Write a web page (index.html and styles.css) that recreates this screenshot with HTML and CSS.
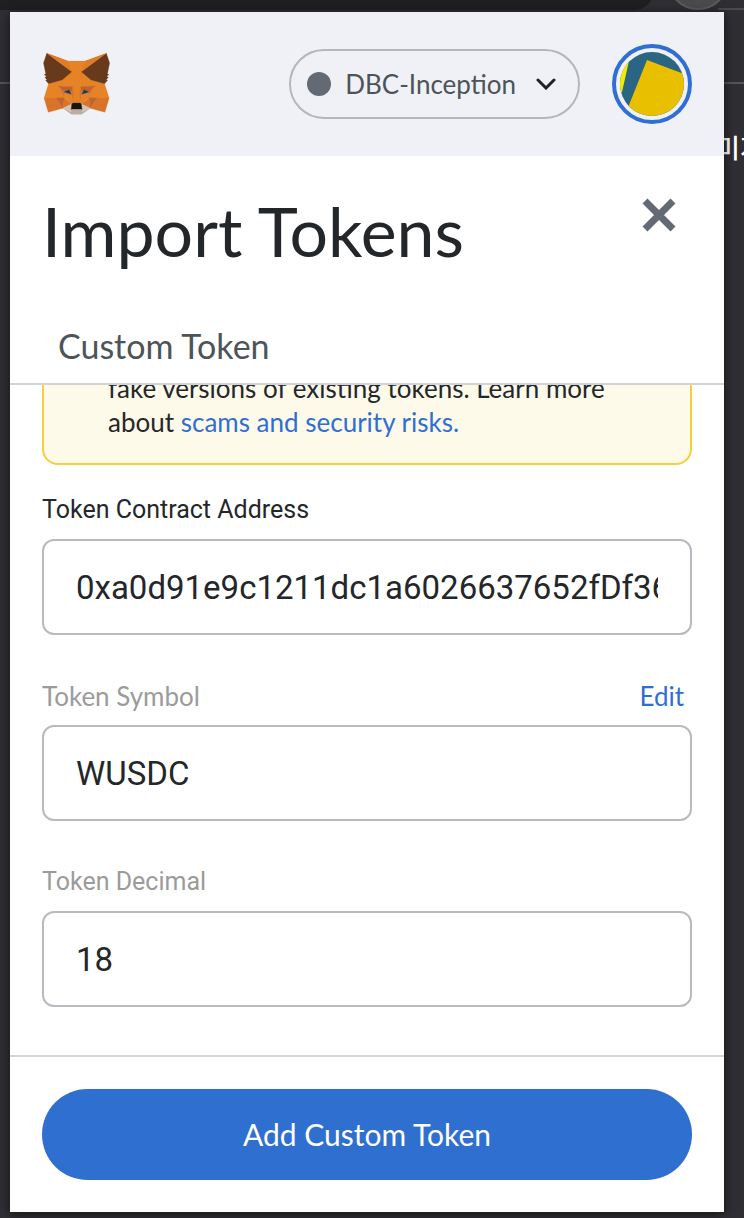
FILE: index.html
```html
<!DOCTYPE html>
<html lang="en">
<head>
<meta charset="utf-8">
<title>Import Tokens</title>
<meta name="viewport" content="width=device-width, initial-scale=1">
<link rel="stylesheet" href="styles.css">
</head>
<body>
<div class="backdrop" aria-hidden="true">
  <div class="backdrop-tabs"></div>
  <div class="backdrop-avatar"></div>
  <div class="backdrop-toolbar"></div>
  <span class="backdrop-text" lang="ko">미지</span>
</div>
<div class="popup">
  <header class="app-header">
    <svg class="fox" viewBox="26 32 266 244" role="img" aria-label="MetaMask">
      <g fill="#d9722a" stroke="#d9722a">
        <polygon points="274.1,35.5 174.6,109.4 193,65.8"/>
        <polygon points="44.4,35.5 143.1,110.1 125.6,65.8"/>
        <polygon points="238.3,206.8 211.8,247.4 268.5,263 284.8,207.7"/>
        <polygon points="33.9,207.7 50.1,263 106.8,247.4 80.3,206.8"/>
        <polygon points="103.6,138.2 87.8,162.1 144.1,164.6 142.1,104.1"/>
        <polygon points="214.9,138.2 175.9,103.4 174.6,164.6 230.8,162.1"/>
        <polygon points="106.8,247.4 140.6,230.9 111.4,208.1"/>
        <polygon points="177.9,230.9 211.8,247.4 207.1,208.1"/>
      </g>
      <g fill="#d4c2b4" stroke="#d4c2b4">
        <polygon points="211.8,247.4 177.9,230.9 180.6,253 180.3,262.3"/>
        <polygon points="106.8,247.4 138.3,262.3 138.1,253 140.6,230.9"/>
      </g>
      <g fill="#e58325" stroke="#e58325">
        <polygon points="179.8,193.5 173.1,227.6 177.9,230.9 207.1,208.1 208.1,185.2"/>
        <polygon points="110.6,185.2 111.4,208.1 140.6,230.9 145.4,227.6 138.8,193.5"/>
        <polygon points="267.2,153.5 214.9,138.2 230.8,162.1 207.1,208.1 238.3,207.7 284.8,207.7"/>
        <polygon points="103.6,138.2 51.3,153.5 33.9,207.7 80.3,207.7 111.4,208.1 87.8,162.1"/>
        <polygon points="214.9,138.2 177.9,106.9 174.6,164.6 230.8,162.1"/>
        <polygon points="103.6,138.2 140.6,106.9 144.1,164.6 87.8,162.1"/>
        <polygon points="174.6,164.6 177.9,106.9 193.1,65.8 125.6,65.8 140.6,106.9 144.1,164.6 145.3,182.8 145.4,227.6 173.1,227.6 173.3,182.8"/>
      </g>
      <g fill="#d9742a" stroke="#d9742a">
        <polygon points="87.8,162.1 111.4,208.1 110.6,185.2"/>
        <polygon points="208.1,185.2 207.1,208.1 230.8,162.1"/>
        <polygon points="144.1,164.6 138.8,193.5 145.4,227.6 146.9,182.7"/>
        <polygon points="174.6,164.6 171.9,182.6 173.1,227.6 179.8,193.5"/>
      </g>
      <g fill="#c1632a" stroke="#c1632a">
        <polygon points="106.8,247.4 111.6,206.8 80.3,207.7"/>
        <polygon points="207,206.8 211.8,247.4 238.3,207.7"/>
        <polygon points="230.8,162.1 174.6,164.6 179.8,193.5 188.1,176.1 208.1,185.2"/>
        <polygon points="110.6,185.2 130.6,176.1 138.8,193.5 144.1,164.6 87.8,162.1"/>
      </g>
      <g fill="#263445" stroke="#263445">
        <polygon points="138.8,193.5 110.6,185.2 130.5,176.1"/>
        <polygon points="179.7,193.5 188,176.1 208,185.2"/>
      </g>
      <polygon fill="#bcae9f" points="180.3,262.3 180.6,253 178.1,250.8 140.4,250.8 138.1,253 138.3,262.3 106.8,247.4 117.8,256.4 140.1,271.9 178.4,271.9 200.8,256.4 211.8,247.4"/>
      <polygon fill="#161616" stroke="#161616" points="177.9,230.9 173.1,227.6 145.4,227.6 140.6,230.9 138.1,253 140.4,250.8 178.1,250.8 180.6,253"/>
      <g fill="#68391b" stroke="#68391b">
        <polygon points="278.3,114.2 286.8,73.4 274.1,35.5 177.9,106.9 214.9,138.2 267.2,153.5 278.8,140 273.8,136.4 281.8,129.1 275.6,124.3 283.6,118.2"/>
        <polygon points="31.8,73.4 40.3,114.2 34.9,118.2 42.9,124.3 36.8,129.1 44.8,136.4 39.8,140 51.3,153.5 103.6,138.2 140.6,106.9 44.4,35.5"/>
      </g>
      <g fill="#e07b26">
        <polygon points="274.1,35.5 177.9,106.9 193,65.8"/>
        <polygon points="44.4,35.5 140.6,106.9 125.6,65.8"/>
      </g>
    </svg>
    <div class="header-controls">
      <button class="network" type="button">
        <span class="network-dot"></span>
        <span class="network-name">DBC-Inception</span>
        <svg class="chevron" viewBox="0 0 20 12" aria-hidden="true"><path d="M2 2l8 8 8-8"/></svg>
      </button>
      <button class="account" type="button" aria-label="Account">
        <svg class="identicon" viewBox="0 0 64 64" aria-hidden="true">
          <defs><clipPath id="disc"><circle cx="32" cy="32" r="32"/></clipPath></defs>
          <g clip-path="url(#disc)">
            <path fill="#2a6583" d="M0 0h64v64H0z"/>
            <path fill="#f3ee00" d="M0 0h11L2 40H0z"/>
            <path fill="#e9c000" d="M27 8l40 15v45H3z"/>
          </g>
        </svg>
      </button>
    </div>
  </header>
  <main class="page">
    <div class="title-row">
      <h1 class="title">Import Tokens</h1>
      <button class="close" type="button" aria-label="Close">
        <svg class="close-icon" viewBox="0 0 34 34" aria-hidden="true"><path d="M3 3l28 28M31 3L3 31"/></svg>
      </button>
    </div>
    <nav class="tabs">
      <button class="tab" type="button">Custom Token</button>
    </nav>
    <form class="form" id="token-form">
      <p class="notice">fake versions of existing tokens. Learn more about <a class="link" href="#risks">scams and security risks.</a></p>
      <div class="field">
        <div class="field-head"><label class="label label-system label-active" for="address">Token Contract Address</label></div>
        <input class="input" id="address" type="text" value="0xa0d91e9c1211dc1a6026637652fDf36">
      </div>
      <div class="field">
        <div class="field-head">
          <label class="label" for="symbol">Token Symbol</label>
          <button class="edit" type="button">Edit</button>
        </div>
        <input class="input" id="symbol" type="text" value="WUSDC">
      </div>
      <div class="field">
        <div class="field-head"><label class="label label-system" for="decimal">Token Decimal</label></div>
        <input class="input" id="decimal" type="text" value="18">
      </div>
    </form>
  </main>
  <footer class="footer">
    <button class="submit" type="submit" form="token-form">Add Custom Token</button>
  </footer>
</div>
</body>
</html>
```
FILE: styles.css
```css
* {
  box-sizing: border-box;
}

body {
  margin: 0;
  min-height: 100vh;
  padding: 12px 20px 6px 10px;
  display: flex;
  background: #2f2e33;
  color: #24272a;
  font-family: Lato, "Noto Sans", sans-serif;
  position: relative;
  overflow: hidden;
}

button {
  margin: 0;
  padding: 0;
  border: 0;
  background: none;
  color: inherit;
  font: inherit;
  cursor: pointer;
}

/* Browser window behind the popup */
.backdrop {
  position: absolute;
  inset: 0;
  overflow: hidden;
}

.backdrop-tabs {
  position: absolute;
  top: -30px;
  left: -30px;
  right: 90px;
  height: 40px;
  border-radius: 24px;
  background: #1f1f21;
}

.backdrop-avatar {
  position: absolute;
  top: -52px;
  right: 15px;
  width: 62px;
  height: 62px;
  border: 2px solid #5a5a5c;
  border-radius: 50%;
  background: #4b4b4d;
}

.backdrop-toolbar {
  position: absolute;
  top: 82px;
  left: 0;
  right: 0;
  border-top: 2px solid #555558;
}

.backdrop-toolbar::before {
  content: "";
  position: absolute;
  top: -76px;
  right: 0;
  width: 26px;
  border-top: 2px solid #4a4a4d;
}

.backdrop-text {
  position: absolute;
  top: 128px;
  left: calc(100% - 28px);
  color: #fff;
  font-family: "Noto Sans CJK KR", sans-serif;
  font-size: 26px;
  font-weight: 500;
  line-height: 38px;
  white-space: nowrap;
}

.popup {
  position: relative;
  flex: 1;
  min-width: 0;
  display: flex;
  flex-direction: column;
  background: #fff;
  box-shadow: 0 2px 10px rgba(0, 0, 0, 0.6);
}

.app-header {
  display: flex;
  align-items: center;
  justify-content: space-between;
  padding: 32px;
  background: #f0f1f6;
}

.fox {
  width: 69px;
  height: 64px;
  stroke-width: 1;
}

.header-controls {
  display: flex;
  align-items: center;
  gap: 32px;
}

.network {
  display: flex;
  align-items: center;
  height: 70px;
  padding: 0 22px 0 16px;
  border: 2px solid #b4b6ba;
  border-radius: 35px;
  color: #4d5459;
  font-size: 26px;
}

.network-dot {
  width: 24px;
  height: 24px;
  margin-right: 14px;
  border-radius: 50%;
  background: #636a74;
}

.chevron {
  width: 20px;
  height: 12px;
  margin-left: 20px;
  fill: none;
  stroke: #1f2226;
  stroke-width: 3;
  stroke-linecap: round;
}

.account {
  display: grid;
  place-items: center;
  width: 80px;
  height: 80px;
  border: 4px solid #2f6fd3;
  border-radius: 50%;
}

.identicon {
  width: 64px;
  height: 64px;
}

.page {
  flex: 1;
  display: flex;
  flex-direction: column;
  min-height: 0;
}

.title-row {
  display: flex;
  align-items: flex-start;
  justify-content: space-between;
  padding: 30px 48px 34px 32px;
}

.title {
  margin: 0;
  font-size: 68px;
  font-weight: 400;
  line-height: 90px;
}

.close {
  display: grid;
  margin-top: 12px;
}

.close-icon {
  width: 34px;
  height: 34px;
  stroke: #636a74;
  stroke-width: 7;
}

.tabs {
  display: flex;
  border-bottom: 2px solid #d0d4d9;
}

.tab {
  padding: 15px 48px 17px;
  color: #4d5459;
  font-size: 34px;
  line-height: 41px;
}

.form {
  flex: 1;
  min-height: 0;
  display: flex;
  flex-direction: column;
  justify-content: flex-end;
  gap: 44px;
  padding: 0 32px 48px;
  overflow: hidden;
}

.notice {
  flex: none;
  margin: -16px 0;
  padding: 0 64px 24px;
  border: 2px solid #f6cf3c;
  border-top: 0;
  border-radius: 0 0 16px 16px;
  background: #fefaea;
  font-size: 26px;
  line-height: 34px;
}

.link {
  color: #2f6fd3;
  text-decoration: none;
}

.field {
  flex: none;
  display: flex;
  flex-direction: column;
  gap: 12px;
}

.field-head {
  display: flex;
  justify-content: space-between;
  padding-right: 8px;
  font-size: 26px;
  line-height: 34px;
}

.label {
  color: #9b9b9b;
}

.label-system {
  font-family: Roboto, sans-serif;
  font-size: 25px;
}

.label-active {
  color: #24272a;
}

.edit {
  color: #2f6fd3;
}

.input {
  width: 100%;
  height: 96px;
  padding: 0 32px;
  border: 2px solid #b7babe;
  border-radius: 12px;
  background: #fff;
  color: #24272a;
  font-family: Roboto, sans-serif;
  font-size: 33px;
}

.footer {
  padding: 32px;
  border-top: 2px solid #d2d5d8;
}

.submit {
  width: 100%;
  padding: 27px 32px 28px;
  border-radius: 48px;
  background: #2f6fd0;
  color: #fff;
  font-size: 30px;
  line-height: 36px;
}
```
